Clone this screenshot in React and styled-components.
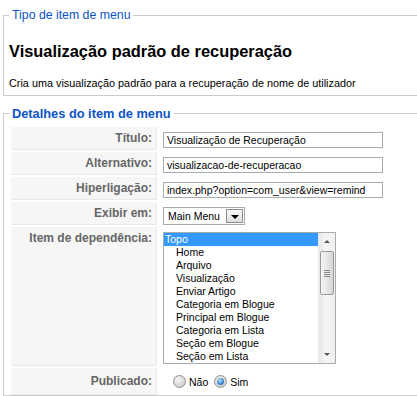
import React from 'react';
import styled, { createGlobalStyle } from 'styled-components';

const GlobalStyle = createGlobalStyle`
  html, body {
    margin: 0;
    padding: 0;
    background: #fff;
    overflow: hidden;
  }
  body {
    font-family: "Liberation Sans", Arial, Helvetica, sans-serif;
  }
`;

const Page = styled.div`
  width: 470px;
  padding: 8px 0 0 3px;
`;

const Fieldset = styled.fieldset`
  margin: ${p => p.$mt || 0}px 0 0 0;
  padding: 0 4px ${p => p.$pb || 0}px 5px;
  border: 1px solid #cccccc;
  min-width: 0;
`;

const Legend = styled.legend`
  padding: 0 3px;
  color: #0b55c4;
  font-size: ${p => (p.$bold ? '12.8px' : '12.3px')};
  font-weight: ${p => (p.$bold ? 'bold' : 'normal')};
  line-height: ${p => (p.$bold ? '15px' : '14px')};
`;

const Heading = styled.h1`
  margin: 20px 0 0;
  font-size: 16.4px;
  line-height: 19px;
  font-weight: bold;
  color: #000;
`;

const Description = styled.p`
  margin: 16px 0 0;
  font-size: 10.85px;
  line-height: 13px;
  color: #000;
`;

const Form = styled.div`
  display: flex;
  flex-direction: column;
  gap: 2px;
  margin: 6px 0 0 2px;
`;

const Row = styled.div`
  display: flex;
  gap: 6px;
  min-height: ${p => p.$h || 23}px;
`;

const Key = styled.div`
  box-sizing: border-box;
  flex: 0 0 146px;
  background: #f6f6f6;
  border-bottom: 1px solid #e9e9e9;
  border-right: 1px solid #e9e9e9;
  padding: ${p => (p.$center ? '0 4px 0 0' : '4px 4px 0 0')};
  display: flex;
  align-items: ${p => (p.$center ? 'center' : 'flex-start')};
  justify-content: flex-end;
  color: #666;
  font-size: 12px;
  line-height: 14px;
  font-weight: bold;
`;

const Value = styled.div`
  flex: 1;
  display: flex;
  align-items: ${p => (p.$center ? 'center' : 'flex-start')};
  padding-top: ${p => (p.$center ? 0 : 5)}px;
  font-size: 10.5px;
  color: #000;
`;

const TextInput = styled.div`
  box-sizing: border-box;
  width: 220px;
  height: 16px;
  border: 1px solid #a5acb2;
  padding: 0 3px;
  font-size: 10.5px;
  line-height: 14px;
  white-space: nowrap;
  overflow: hidden;
`;

const Select = styled.div`
  box-sizing: border-box;
  display: flex;
  align-items: center;
  width: 82px;
  height: 18px;
  border: 1px solid #a5acb2;
  padding: 0 1px 0 4px;
  font-size: 10.5px;
`;

const SelectText = styled.span`
  flex: 1;
`;

const SelectButton = styled.span`
  box-sizing: border-box;
  width: 17px;
  height: 14px;
  border: 1px solid #8f8f8f;
  background: linear-gradient(#fbfbfb, #dedede);
  display: flex;
  align-items: center;
  justify-content: center;
  &::after {
    content: '';
    border-left: 4px solid transparent;
    border-right: 4px solid transparent;
    border-top: 4px solid #000;
    margin-top: 1px;
  }
`;

const ListBox = styled.div`
  box-sizing: border-box;
  display: flex;
  width: 173px;
  height: 132px;
  border: 1px solid #a5acb2;
`;

const Options = styled.div`
  flex: 1;
  display: flex;
  flex-direction: column;
`;

const Option = styled.div`
  height: 13px;
  line-height: 13px;
  font-size: 10.5px;
  padding-left: ${p => (p.$indent ? 12 : 1)}px;
  background: ${p => (p.$selected ? '#3399ff' : 'transparent')};
  color: ${p => (p.$selected ? '#fff' : '#000')};
  white-space: nowrap;
`;

const Scrollbar = styled.div`
  width: 16px;
  display: flex;
  flex-direction: column;
  background: linear-gradient(90deg, #e6e6e6, #f5f5f5 40%, #f0f0f0);
  border-left: 1px solid #ececec;
`;

const Arrow = styled.div`
  height: 17px;
  display: flex;
  align-items: center;
  justify-content: center;
  &::after {
    content: '';
    border-left: 3px solid transparent;
    border-right: 3px solid transparent;
    ${p => (p.$down ? 'border-top: 3px solid #555;' : 'border-bottom: 3px solid #555;')}
  }
`;

const Track = styled.div`
  flex: 1;
  padding-top: 1px;
`;

const Thumb = styled.div`
  box-sizing: border-box;
  margin: 0 1px;
  height: 44px;
  border: 1px solid #9a9a9a;
  border-radius: 2px;
  background: linear-gradient(90deg, #f3f3f3, #e6e6e6 50%, #d4d4d4);
  display: flex;
  flex-direction: column;
  align-items: center;
  justify-content: center;
  gap: 1px;
`;

const Grip = styled.span`
  width: 6px;
  height: 1px;
  background: #8a8a8a;
`;

const Radio = styled.span`
  box-sizing: border-box;
  width: 13px;
  height: 13px;
  border-radius: 50%;
  border: 1px solid #929292;
  margin-left: ${p => p.$ml}px;
  display: flex;
  align-items: center;
  justify-content: center;
  background: radial-gradient(circle at 40% 35%, #f4f4f4, #d2d2d2 70%, #c4c4c4);
  &::after {
    content: '';
    display: ${p => (p.$checked ? 'block' : 'none')};
    width: 7px;
    height: 7px;
    border-radius: 50%;
    background: radial-gradient(circle at 40% 35%, #bfe3ff, #3b8cd0 55%, #1a4f86);
  }
`;

const RadioLabel = styled.span`
  margin-left: 3px;
  font-size: 10.5px;
`;

const items = [
  'Home',
  'Arquivo',
  'Visualização',
  'Enviar Artigo',
  'Categoria em Blogue',
  'Principal em Blogue',
  'Categoria em Lista',
  'Seção em Blogue',
  'Seção em Lista',
];

const App = () => {
  return (
    <Page>
      <GlobalStyle />
      <Fieldset $pb={5}>
        <Legend>Tipo de item de menu</Legend>
        <Heading>Visualização padrão de recuperação</Heading>
        <Description>Cria uma visualização padrão para a recuperação de nome de utilizador</Description>
      </Fieldset>

      <Fieldset $mt={10}>
        <Legend $bold>Detalhes do item de menu</Legend>
        <Form>
          <Row>
            <Key>Título:</Key>
            <Value><TextInput>Visualização de Recuperação</TextInput></Value>
          </Row>
          <Row>
            <Key>Alternativo:</Key>
            <Value><TextInput>visualizacao-de-recuperacao</TextInput></Value>
          </Row>
          <Row>
            <Key>Hiperligação:</Key>
            <Value><TextInput>index.php?option=com_user&amp;view=remind</TextInput></Value>
          </Row>
          <Row>
            <Key>Exibir em:</Key>
            <Value>
              <Select>
                <SelectText>Main Menu</SelectText>
                <SelectButton />
              </Select>
            </Value>
          </Row>
          <Row $h={139}>
            <Key>Item de dependência:</Key>
            <Value>
              <ListBox>
                <Options>
                  <Option $selected>Topo</Option>
                  {items.map((item, i) => (
                    <Option $indent key={i}>{item}</Option>
                  ))}
                </Options>
                <Scrollbar>
                  <Arrow />
                  <Track>
                    <Thumb>
                      <Grip />
                      <Grip />
                      <Grip />
                      <Grip />
                    </Thumb>
                  </Track>
                  <Arrow $down />
                </Scrollbar>
              </ListBox>
            </Value>
          </Row>
          <Row $h={27}>
            <Key $center>Publicado:</Key>
            <Value $center>
              <Radio $ml={10} />
              <RadioLabel>Não</RadioLabel>
              <Radio $ml={6} $checked />
              <RadioLabel>Sim</RadioLabel>
            </Value>
          </Row>
        </Form>
      </Fieldset>
    </Page>
  );
};

export default App;
